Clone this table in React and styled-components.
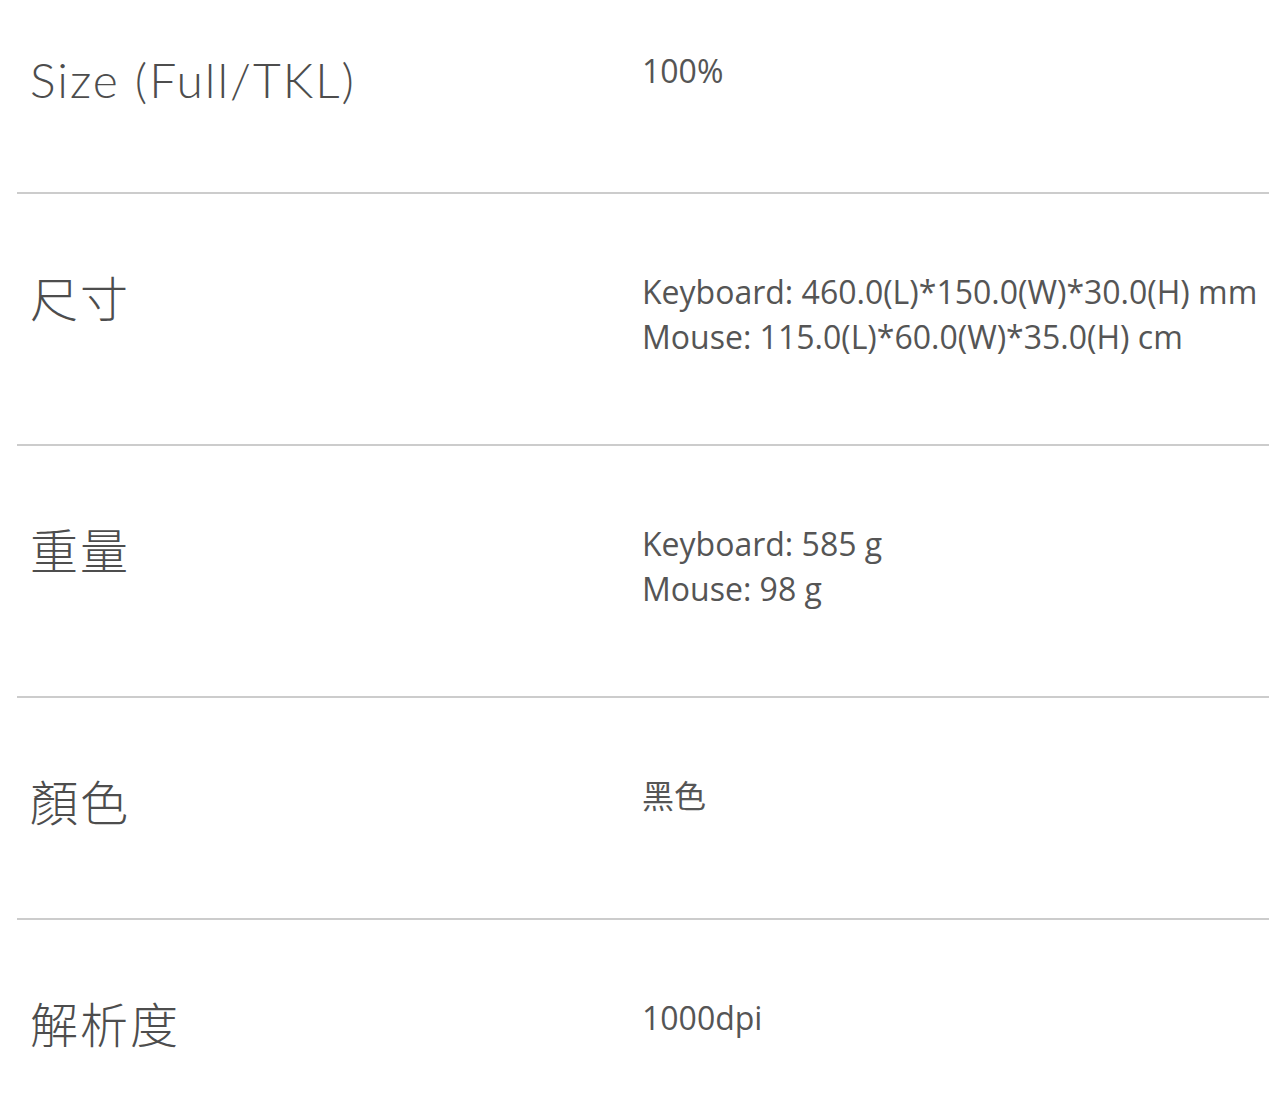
import React from "react";
import styled, { createGlobalStyle } from "styled-components";

const Global = createGlobalStyle`
  html, body { margin: 0; padding: 0; background: #fff; }
  body { overflow: hidden; }
`;

const Table = styled.div`
  padding-left: 17px;
  display: flex;
  flex-direction: column;
`;

const Row = styled.div`
  display: grid;
  grid-template-columns: 625px 1fr;
  align-items: start;
  padding: ${(p) => (p.$first ? "55px 0 77px" : "80px 0 80px")};
  border-bottom: ${(p) => (p.$last ? "none" : "2px solid #cccccc")};
`;

const Label = styled.div`
  padding-left: 13px;
  padding-bottom: 10px;
  font-family: Lato, "Noto Sans CJK TC", sans-serif;
  font-weight: 300;
  font-size: 48px;
  line-height: 50px;
  letter-spacing: 2px;
  color: #4d4d4d;
  white-space: nowrap;
`;

const Value = styled.div`
  margin-top: ${(p) => (p.$first ? "-7px" : "-5px")};
  margin-bottom: ${(p) => (p.$first ? "7px" : "5px")};
  font-family: "Open Sans", "Noto Sans CJK TC", sans-serif;
  font-size: 32px;
  line-height: 45px;
  color: #555555;
  white-space: nowrap;
`;

const rows = [
  { label: "Size (Full/TKL)", value: ["100%"] },
  {
    label: "尺寸",
    value: [
      "Keyboard: 460.0(L)*150.0(W)*30.0(H) mm",
      "Mouse: 115.0(L)*60.0(W)*35.0(H) cm",
    ],
  },
  { label: "重量", value: ["Keyboard: 585 g", "Mouse: 98 g"] },
  { label: "顏色", value: ["黑色"] },
  { label: "解析度", value: ["1000dpi"] },
];

export default function App() {
  return (
    <>
      <Global />
      <Table>
        {rows.map((r, i) => (
          <Row key={i} $first={i === 0} $last={i === rows.length - 1}>
            <Label>{r.label}</Label>
            <Value $first={i === 0}>
              {r.value.map((v, j) => (
                <div key={j}>{v}</div>
              ))}
            </Value>
          </Row>
        ))}
      </Table>
    </>
  );
}
